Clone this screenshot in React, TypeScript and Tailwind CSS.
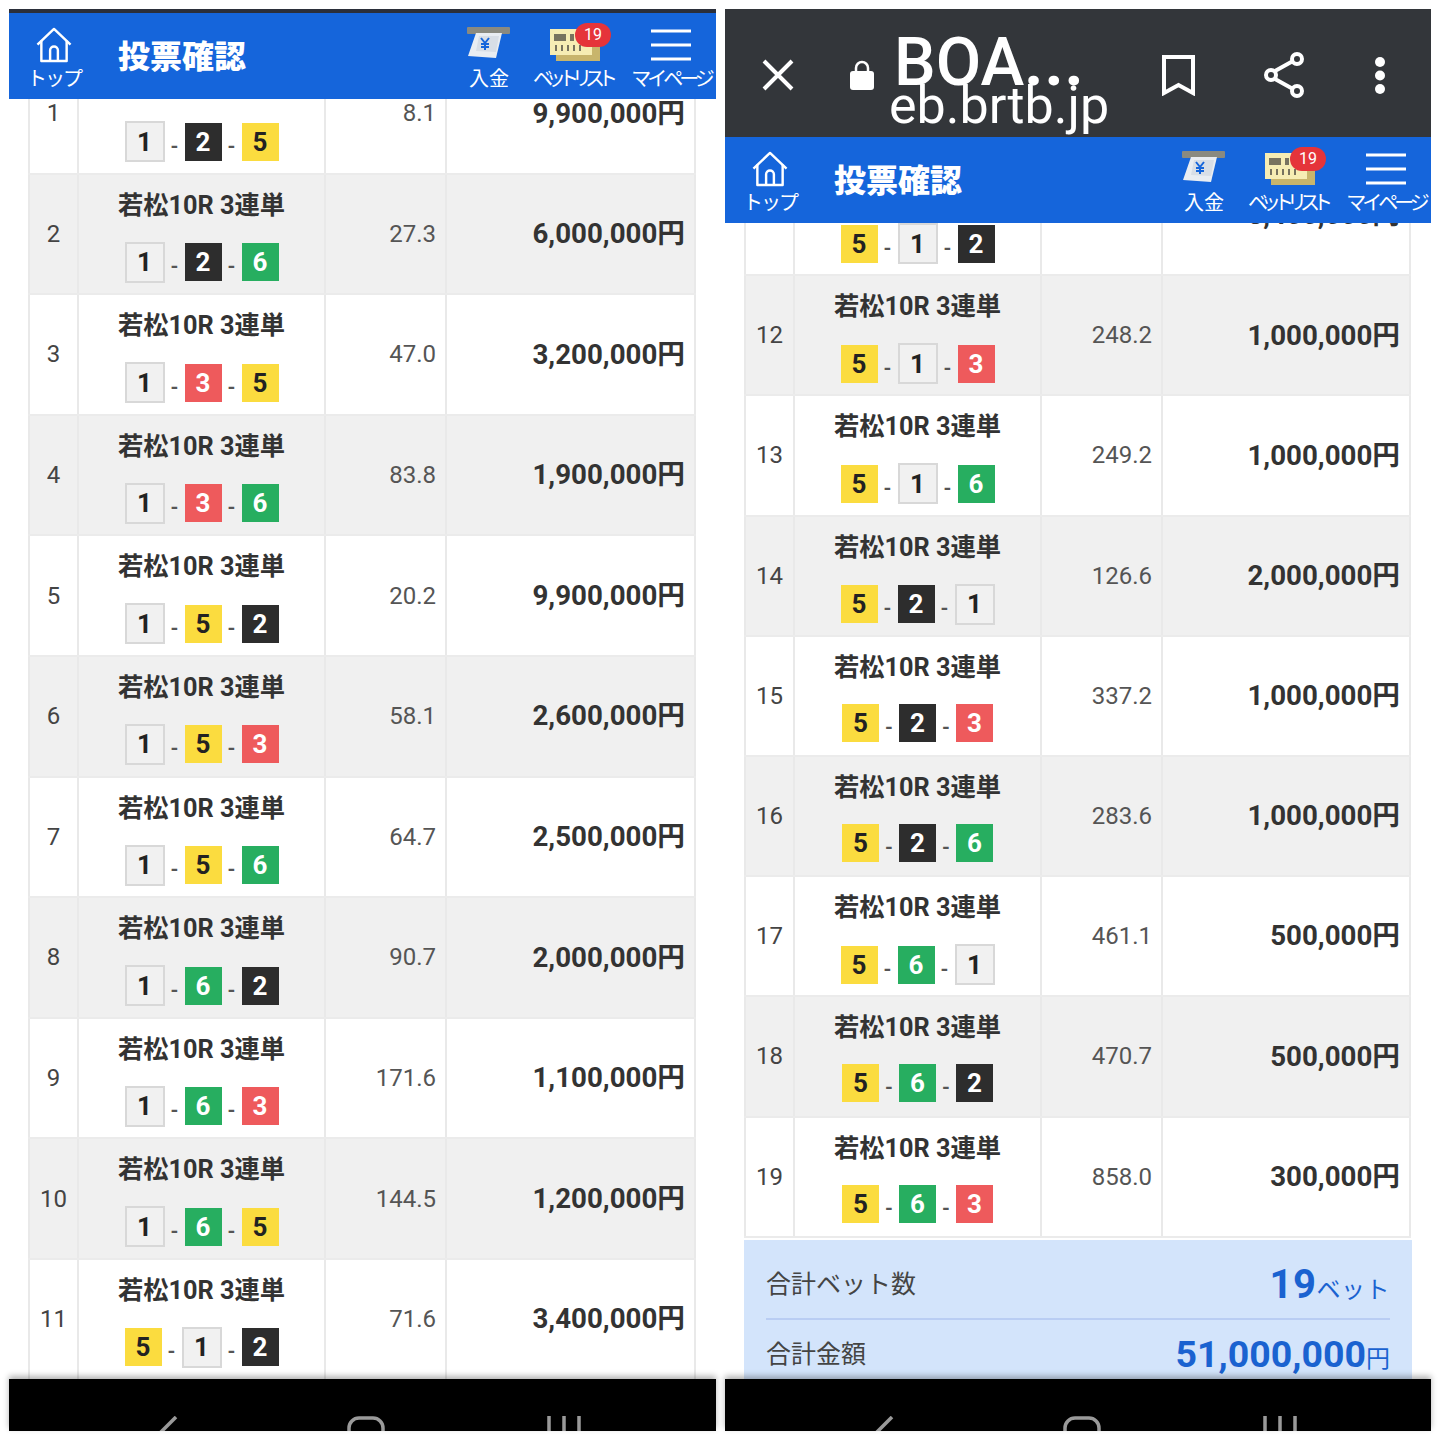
const FONT = "font-['Roboto','Noto_Sans_CJK_JP',sans-serif]";

type Bet = { no: number; combo: number[]; odds: string; amount: string };

const leftBets: Bet[] = [
  { no: 1, combo: [1, 2, 5], odds: "8.1", amount: "9,900,000" },
  { no: 2, combo: [1, 2, 6], odds: "27.3", amount: "6,000,000" },
  { no: 3, combo: [1, 3, 5], odds: "47.0", amount: "3,200,000" },
  { no: 4, combo: [1, 3, 6], odds: "83.8", amount: "1,900,000" },
  { no: 5, combo: [1, 5, 2], odds: "20.2", amount: "9,900,000" },
  { no: 6, combo: [1, 5, 3], odds: "58.1", amount: "2,600,000" },
  { no: 7, combo: [1, 5, 6], odds: "64.7", amount: "2,500,000" },
  { no: 8, combo: [1, 6, 2], odds: "90.7", amount: "2,000,000" },
  { no: 9, combo: [1, 6, 3], odds: "171.6", amount: "1,100,000" },
  { no: 10, combo: [1, 6, 5], odds: "144.5", amount: "1,200,000" },
  { no: 11, combo: [5, 1, 2], odds: "71.6", amount: "3,400,000" },
];

const rightBets: Bet[] = [
  { no: 11, combo: [5, 1, 2], odds: "71.6", amount: "3,400,000" },
  { no: 12, combo: [5, 1, 3], odds: "248.2", amount: "1,000,000" },
  { no: 13, combo: [5, 1, 6], odds: "249.2", amount: "1,000,000" },
  { no: 14, combo: [5, 2, 1], odds: "126.6", amount: "2,000,000" },
  { no: 15, combo: [5, 2, 3], odds: "337.2", amount: "1,000,000" },
  { no: 16, combo: [5, 2, 6], odds: "283.6", amount: "1,000,000" },
  { no: 17, combo: [5, 6, 1], odds: "461.1", amount: "500,000" },
  { no: 18, combo: [5, 6, 2], odds: "470.7", amount: "500,000" },
  { no: 19, combo: [5, 6, 3], odds: "858.0", amount: "300,000" },
];

const boatStyles: Record<number, string> = {
  1: "w-[40px] h-[41px] border-2 border-[#d8d8d8] bg-[#f1f1f1] text-[#222]",
  2: "w-[37px] h-[38px] bg-[#2d2d2d] text-white",
  3: "w-[37px] h-[38px] bg-[#ee5a5c] text-white",
  5: "w-[37px] h-[38px] bg-[#fbdc3f] text-[#222]",
  6: "w-[37px] h-[38px] bg-[#27ae60] text-white",
};

function Boat({ n }: { n: number }) {
  return (
    <span className={`flex items-center justify-center text-[26px] font-bold leading-none ${boatStyles[n]}`}>
      {n}
    </span>
  );
}

function Row({ bet, height }: { bet: Bet; height: string }) {
  const bg = bet.no % 2 === 0 ? "bg-[#f0f0f0]" : "bg-white";
  const line = "border-[#e9e9e9]";
  return (
    <div className={`grid grid-cols-[51px_247px_121px_1fr] border-b-2 border-[#ebebeb] ${bg} ${height}`}>
      <div className={`flex items-center justify-center border-x-2 ${line} text-[24px] text-[#444]`}>{bet.no}</div>
      <div className={`flex flex-col items-center border-r-2 ${line} pt-[15px]`}>
        <span className="h-[32px] text-[25.300px] font-bold leading-[32px] text-[#333]">若松10R 3連単</span>
        <div className="mt-[20px] flex items-center">
          {bet.combo.map((n, i) => (
            <div className="flex items-center" key={i}>
              {i > 0 ? <span className="w-[20px] pt-[8px] text-center text-[20px] font-bold leading-none text-[#555]">-</span> : null}
              <Boat n={n} />
            </div>
          ))}
        </div>
      </div>
      <div className={`flex items-center justify-end border-r-2 ${line} pr-[9px] text-[24px] text-[#555]`}>{bet.odds}</div>
      <div className={`flex items-center justify-end border-r-2 ${line} pr-[9px] text-[27.700px] font-bold text-[#333]`}>
        {bet.amount}円
      </div>
    </div>
  );
}

function NavLabel({ children, className }: { children: string; className: string }) {
  return <span className={`mt-[4px] whitespace-nowrap text-[20px] leading-[24px] text-white ${className}`}>{children}</span>;
}

function SiteHeader() {
  return (
    <header className="relative z-10 flex h-[86px] shrink-0 items-center bg-[#1565db] pt-[5px]">
      <div className="flex w-[90px] flex-col items-center">
        <svg className="h-[36px] w-[38px]" viewBox="0 0 38 37" fill="none" stroke="white" strokeWidth="2.5" strokeLinejoin="round">
          <path d="M2 18 19 2l17 16" />
          <path d="M6 14v21h26V14" />
          <path d="M15 35V24a4 4 0 0 1 8 0v11" />
        </svg>
        <NavLabel className="tracking-[-2px]">トップ</NavLabel>
      </div>
      <h1 className="ml-[19px] flex-1 pb-[3px] text-[32px] font-black leading-none text-white">投票確認</h1>
      <div className="flex w-[80px] flex-col items-center">
        <svg className="h-[36px] w-[44px]" viewBox="0 0 44 36">
          <rect x="0" y="0" width="43" height="7" rx="1" fill="#8a8a80" />
          <path d="M9 6h26l-6 25-28-2z" fill="#e9edf2" />
          <path d="M12 9h20l-3 16-20-1z" fill="#d8dee6" />
          <path d="m14 11 4 5 4-5M18 16v7M14 17h8M14 20h8" fill="none" stroke="#1565db" strokeWidth="2" />
        </svg>
        <NavLabel>入金</NavLabel>
      </div>
      <div className="flex w-[92px] flex-col items-center">
        <div className="relative h-[36px] w-[50px]">
          <svg className="h-[36px] w-[50px]" viewBox="0 0 50 36">
            <rect x="6" y="8" width="44" height="26" fill="#c8b56c" />
            <rect x="0" y="2" width="42" height="26" fill="#f6edb4" />
            <rect x="4" y="7" width="12" height="7" fill="#77735f" />
            <rect x="20" y="7" width="4" height="7" fill="#77735f" />
            <rect x="28" y="7" width="4" height="7" fill="#77735f" />
            <path d="M6 18v6M12 18v6M18 18v6M24 18v6M30 18v6" stroke="#77735f" strokeWidth="2" />
          </svg>
          <span className="absolute -right-[11px] -top-[4px] flex h-[24px] w-[36px] items-center justify-center rounded-full bg-[#e5343a] text-[16px] leading-none text-white">
            19
          </span>
        </div>
        <NavLabel className="pr-[6px] tracking-[-7px]">ベットリスト</NavLabel>
      </div>
      <div className="ml-[10px] mr-[5px] flex w-[80px] flex-col items-center">
        <svg className="h-[36px] w-[40px]" viewBox="0 0 40 36" stroke="white" strokeWidth="3">
          <path d="M0 4h40M0 18h40M0 32h40" />
        </svg>
        <NavLabel className="tracking-[-4px]">マイページ</NavLabel>
      </div>
    </header>
  );
}

function BrowserBar() {
  return (
    <div className="flex h-[128px] shrink-0 items-center bg-[#33363a] pt-[4px] text-white">
      <svg className="ml-[37px] h-[32px] w-[32px]" viewBox="0 0 32 32" stroke="white" strokeWidth="4">
        <path d="m2 2 28 28M30 2 2 30" />
      </svg>
      <svg className="ml-[56px] h-[30px] w-[24px]" viewBox="0 0 24 30" fill="white">
        <path d="M6 12V8a6 6 0 0 1 12 0v4" fill="none" stroke="white" strokeWidth="2.5" />
        <rect x="0" y="11" width="24" height="19" rx="3" />
      </svg>
      <div className="ml-[20px] flex w-[268px] flex-col pt-[15px]">
        <span className="h-[58px] whitespace-nowrap text-[66px] font-medium leading-[58px]">
          BOA<span className="font-bold tracking-[1px]">...</span>
        </span>
        <span className="-ml-[5px] -mt-[11px] h-[50px] whitespace-nowrap text-[52px] leading-[50px]">eb.brtb.jp</span>
      </div>
      <svg className="h-[41px] w-[33px]" viewBox="0 0 33 41" fill="none" stroke="white" strokeWidth="4">
        <path d="M2 2h29v36L16.500 30 2 38z" />
      </svg>
      <svg className="ml-[68px] h-[46px] w-[42px]" viewBox="0 0 42 46" fill="none" stroke="white" strokeWidth="4">
        <path d="M12 19 30 9M12 27l18 10" />
        <circle cx="34" cy="7" r="5" />
        <circle cx="8" cy="23" r="5" />
        <circle cx="34" cy="39" r="5" />
      </svg>
      <svg className="ml-[70px] h-[37px] w-[10px]" viewBox="0 0 10 37" fill="white">
        <circle cx="5" cy="5" r="5" />
        <circle cx="5" cy="18.500" r="5" />
        <circle cx="5" cy="32" r="5" />
      </svg>
    </div>
  );
}

function Summary() {
  return (
    <section className="-mr-[1px] mt-[2px] bg-[#d3e4fb] px-[22px]">
      <div className="flex h-[80px] items-center justify-between border-b-2 border-[#b9cdf3] pt-[13px]">
        <span className="text-[25px] text-[#444]">合計ベット数</span>
        <span className="text-[24px] leading-none tracking-[0.5px] text-[#1a62d0]">
          <span className="text-[40px] font-bold">19</span>ベット
        </span>
      </div>
      <div className="flex h-[70px] items-center justify-between">
        <span className="text-[25px] text-[#444]">合計金額</span>
        <span className="text-[24px] leading-none text-[#1a62d0]">
          <span className="text-[37.500px] font-bold">51,000,000</span>円
        </span>
      </div>
    </section>
  );
}

function SoftKeys() {
  return (
    <div className="relative z-10 flex h-[52px] shrink-0 overflow-hidden bg-black pl-[150px] pt-[37px] shadow-[0_-3px_6px_rgba(0,0,0,0.3)]">
      <svg className="h-[16px] w-[20px] shrink-0" viewBox="0 0 20 16" fill="none" stroke="#9a9a9a" strokeWidth="3.500">
        <path d="M17 1 1 17" />
      </svg>
      <svg className="ml-[168px] h-[16px] w-[38px] shrink-0" viewBox="0 0 38 16" fill="none" stroke="#9a9a9a" strokeWidth="3.500">
        <rect x="2" y="2" width="34" height="34" rx="10" />
      </svg>
      <svg className="ml-[162px] h-[16px] w-[34px] shrink-0" viewBox="0 0 34 16" stroke="#9a9a9a" strokeWidth="3.500">
        <path d="M2 0v16M17 0v16M32 0v16" />
      </svg>
    </div>
  );
}

export default function App() {
  return (
    <div className={`flex h-[1440px] w-[1440px] gap-[9px] bg-white p-[9px] ${FONT}`}>
      <div className="flex w-[707px] flex-col">
        <div className="h-[4px] shrink-0 bg-[#2b2f3a]" />
        <SiteHeader />
        <main className="min-h-0 flex-1 overflow-hidden pl-[19px] pr-[20px]">
          <div className="-mt-[45px]">
            {leftBets.map((bet) => (
              <Row bet={bet} height="h-[120.600px]" key={bet.no} />
            ))}
          </div>
        </main>
        <SoftKeys />
      </div>
      <div className="flex w-[706px] flex-col">
        <BrowserBar />
        <SiteHeader />
        <main className="min-h-0 flex-1 overflow-hidden pl-[19px] pr-[20px]">
          <div className="-mt-[67px]">
            {rightBets.map((bet) => (
              <Row bet={bet} height="h-[120.200px]" key={bet.no} />
            ))}
          </div>
          <Summary />
        </main>
        <SoftKeys />
      </div>
    </div>
  );
}
